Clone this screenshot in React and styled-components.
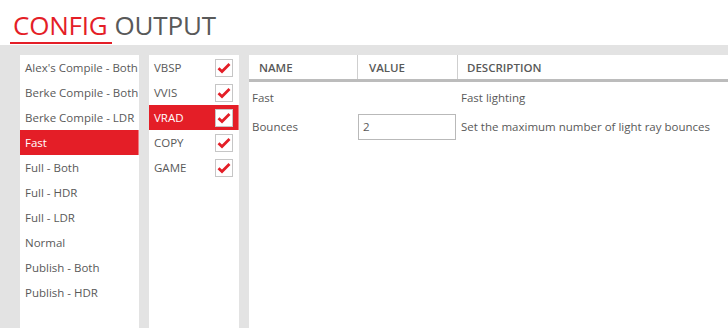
import React from "react";
import styled, { createGlobalStyle } from "styled-components";

const RED = "#e41e27";

const Global = createGlobalStyle`
  html, body { margin: 0; padding: 0; background: #fff; }
  body { font-family: "Open Sans", "Liberation Sans", sans-serif; color: #595959; overflow: hidden; }
  * { box-sizing: border-box; }
`;

const Page = styled.div`
  display: flex;
  flex-direction: column;
  height: 100vh;
`;

const TabBar = styled.div`
  display: flex;
  align-items: flex-end;
  height: 45px;
  padding-left: 10px;
  padding-bottom: 1px;
`;

const Tab = styled.div`
  font-size: 26px;
  line-height: 34px;
  padding: 0 4px 0 3px;
  color: ${(p) => (p.$active ? RED : "#595959")};
  border-bottom: 2px solid ${(p) => (p.$active ? RED : "transparent")};
  letter-spacing: -0.2px;
`;

const Main = styled.div`
  flex: 1;
  background: #e3e3e3;
  display: flex;
  gap: 10px;
  padding: 10px 0 0 20px;
  min-height: 0;
`;

const Panel = styled.div`
  background: #fff;
  width: ${(p) => p.$w || "auto"};
  flex: ${(p) => (p.$grow ? 1 : "none")};
  overflow: hidden;
`;

const ListItem = styled.div`
  height: 25px;
  display: flex;
  align-items: center;
  padding-left: 5px;
  font-size: 11.5px;
  white-space: nowrap;
  color: ${(p) => (p.$sel ? "#fff" : "#595959")};
  background: ${(p) => (p.$sel ? RED : "transparent")};
  box-shadow: ${(p) => (p.$sel ? "inset -1px 0 #ee7a7f" : "none")};
`;

const StepRow = styled(ListItem)`
  justify-content: space-between;
  padding-right: 6px;
`;

const Box = styled.span`
  width: 18px;
  height: 18px;
  border: 1px solid #c6c6c6;
  background: #fff;
  display: flex;
  align-items: center;
  justify-content: center;
  margin-top: 1px;
`;

const Grid = styled.div`
  display: grid;
  grid-template-columns: 109px 100px 1fr;
  align-items: center;
`;

const Head = styled(Grid)`
  height: 27px;
  border-bottom: 3px solid #bcbcbc;
  align-items: stretch;
`;

const HeadCell = styled.div`
  display: flex;
  align-items: center;
  padding-left: ${(p) => p.$pad || "10px"};
  font-size: 11.5px;
  font-weight: 600;
  color: #595959;
  border-right: ${(p) => (p.$last ? "none" : "1px solid #cfcfcf")};
`;

const Body = styled.div`
  padding-top: 1px;
`;

const Row = styled(Grid)`
  height: 29px;
  font-size: 11.5px;
  color: #595959;
`;

const Cell = styled.div`
  padding-left: ${(p) => p.$pad || "3px"};
  white-space: nowrap;
`;

const Input = styled.input`
  width: 98px;
  height: 26px;
  border: 1px solid #b9b9b9;
  padding: 0 4px;
  font: inherit;
  color: #595959;
  outline: none;
`;

const Check = () => (
  <svg width="14" height="12" viewBox="0 0 14 12">
    <path d="M1.5 6.2 L5 9.5 L12.5 2" fill="none" stroke={RED} strokeWidth="2.8" strokeLinecap="butt" />
  </svg>
);

const configs = [
  "Alex's Compile - Both",
  "Berke Compile - Both",
  "Berke Compile - LDR",
  "Fast",
  "Full - Both",
  "Full - HDR",
  "Full - LDR",
  "Normal",
  "Publish - Both",
  "Publish - HDR",
];

const steps = ["VBSP", "VVIS", "VRAD", "COPY", "GAME"];

export default function App() {
  return (
    <Page>
      <Global />
      <TabBar>
        <Tab $active>CONFIG</Tab>
        <Tab>OUTPUT</Tab>
      </TabBar>
      <Main>
        <Panel $w="119px">
          {configs.map((c) => (
            <ListItem key={c} $sel={c === "Fast"}>{c}</ListItem>
          ))}
        </Panel>
        <Panel $w="90px">
          {steps.map((s) => (
            <StepRow key={s} $sel={s === "VRAD"}>
              {s}
              <Box><Check /></Box>
            </StepRow>
          ))}
        </Panel>
        <Panel $grow>
          <Head>
            <HeadCell>NAME</HeadCell>
            <HeadCell $pad="11px">VALUE</HeadCell>
            <HeadCell $last $pad="9px">DESCRIPTION</HeadCell>
          </Head>
          <Body>
            <Row>
              <Cell>Fast</Cell>
              <Cell $pad="0" />
              <Cell>Fast lighting</Cell>
            </Row>
            <Row>
              <Cell>Bounces</Cell>
              <Cell $pad="0"><Input defaultValue="2" /></Cell>
              <Cell>Set the maximum number of light ray bounces</Cell>
            </Row>
          </Body>
        </Panel>
      </Main>
    </Page>
  );
}
